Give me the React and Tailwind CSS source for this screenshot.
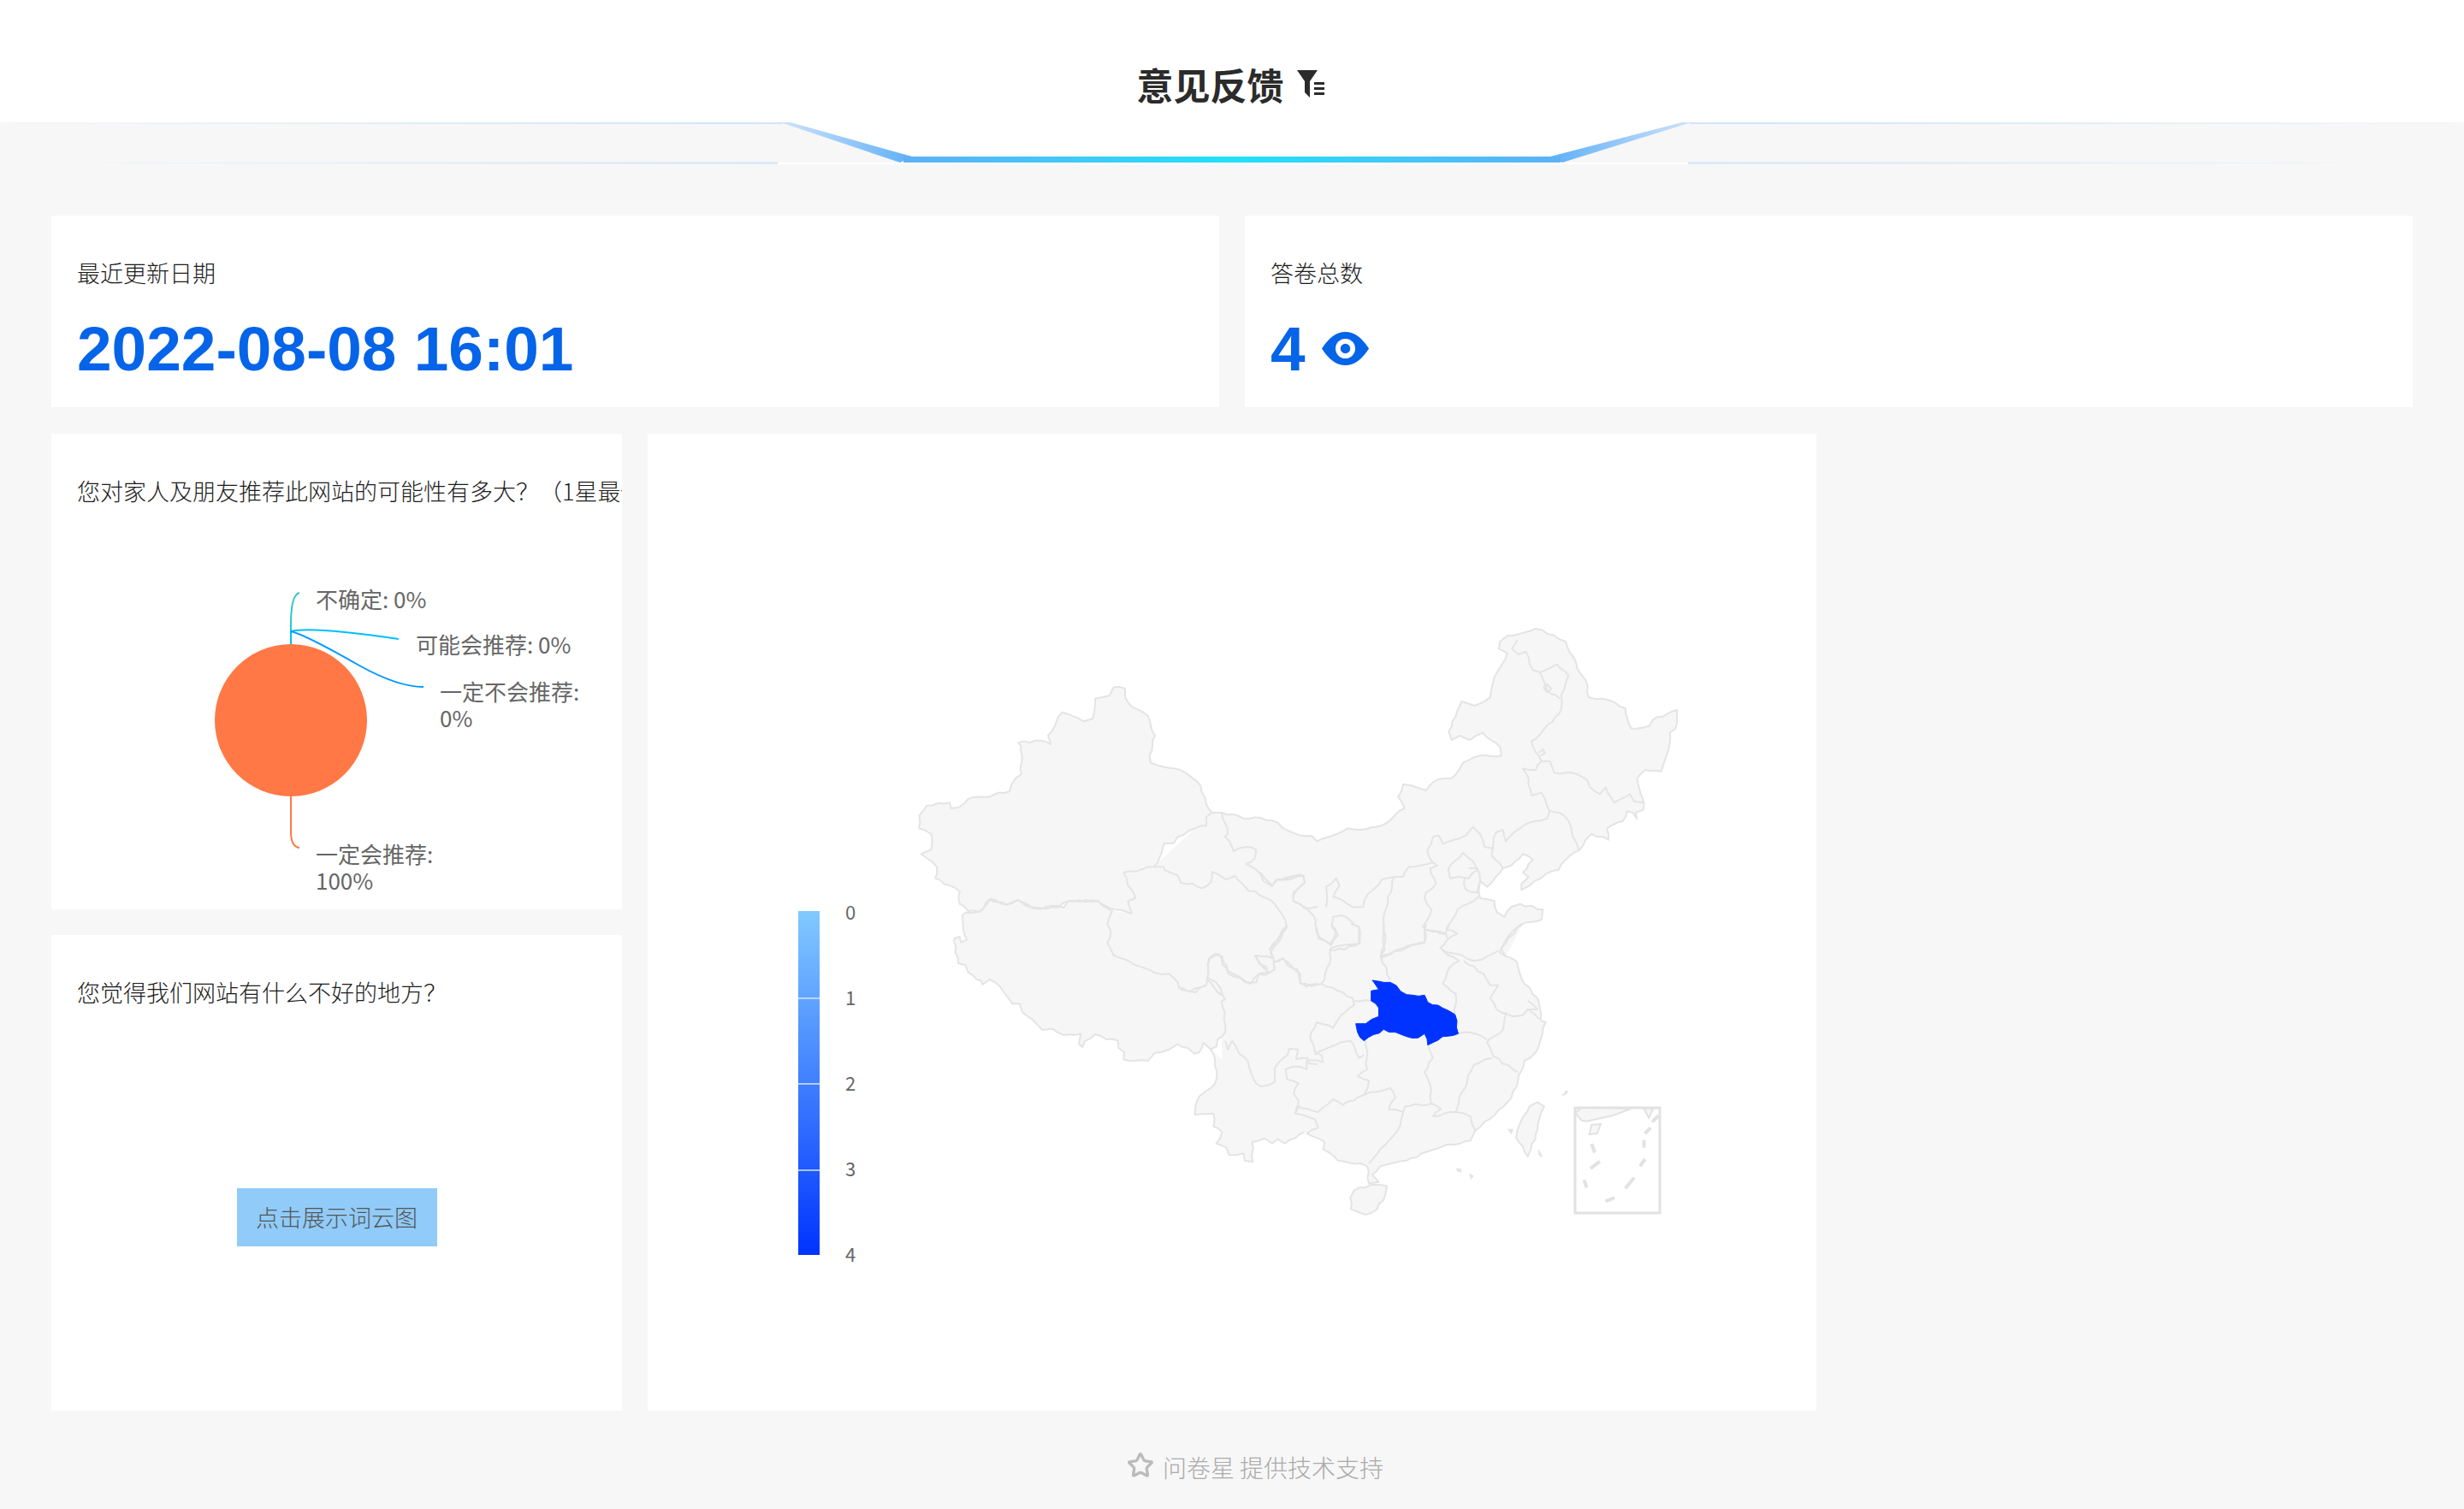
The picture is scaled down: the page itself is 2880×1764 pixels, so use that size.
import React from 'react';
import { Star } from 'lucide-react';

// crop origin + scale each trace was read from
const CROPS = {
  A: [1040, 720, 3, 3],
  B: [1500, 720, 3, 3],
  C: [1060, 1020, 3, 3],
  D: [1380, 1080, 2.613, 3],
};

const read = (crop, s) => {
  const [ox, oy, sx, sy] = CROPS[crop];
  return s.trim().split(/\s+/).map((p) => {
    const [x, y] = p.split(',').map(Number);
    return [ox + x / sx, oy + y / sy];
  });
};

// borders in the picture are rough, so break long segments up a little
const rough = (pts) => {
  const out = [];
  for (let i = 0; i < pts.length - 1; i++) {
    const [ax, ay] = pts[i];
    const [bx, by] = pts[i + 1];
    const len = Math.hypot(bx - ax, by - ay) || 1;
    const n = Math.max(1, Math.floor(len / 6));
    for (let k = 0; k < n; k++) {
      const t = k / n;
      const x = ax + (bx - ax) * t;
      const y = ay + (by - ay) * t;
      const off = k === 0 ? 0 : Math.sin(x * 12.9 + y * 78.2) * 1.3;
      out.push([x - ((by - ay) / len) * off, y + ((bx - ax) / len) * off]);
    }
  }
  out.push(pts[pts.length - 1]);
  return out;
};

const str = (pts) => pts.map((p) => `${p[0].toFixed(1)},${p[1].toFixed(1)}`).join(' ');

const xinjiang = read('A', '785,250 825,255 825,285 850,320 905,350 930,420 910,490 915,515 1020,540 1090,595 1110,660 1130,690 1110,705 1110,735 1070,745 1010,775 995,797 962,797 945,850 925,880 820,900 835,945 862,990 835,1000 848,1043 790,1030 730,1000 625,1000 590,1022 530,1025 475,1015 450,995 410,1012 350,995 315,1038 275,1035 245,1010 245,965 190,940 160,920 165,880 110,835 145,820 145,765 103,745 103,700 130,665 210,655 215,675 240,672 275,642 330,635 420,615 440,570 462,555 460,455 450,445 530,437 565,450 555,420 605,338 680,370 712,360 720,290 770,280 785,250');
const tibet = read('C', '205,140 255,137 290,93 350,113 390,97 440,125 470,128 510,117 550,123 565,100 670,100 720,135 703,180 715,205 703,245 725,290 800,325 870,352 920,355 950,385 955,405 990,418 1050,395 1055,370 1085,385 1115,445 1103,452 1115,490 1117,560 1105,575 1090,585 1085,610 1065,620 1040,597 1025,630 1008,635 985,615 950,602 920,620 870,632 845,660 800,660 760,655 762,630 742,615 740,590 700,585 660,567 625,590 615,612 603,600 610,565 550,570 510,548 475,552 440,515 405,490 395,460 370,460 340,420 310,385 290,375 265,393 260,380 215,350 205,325 180,318 165,240 168,230 185,225 190,245 210,235 197,180 195,150 205,140');
const yunnan = read('C', '1065,620 1080,655 1087,700 1080,740 1050,765 1025,785 1012,820 1010,850 1075,845 1075,890 1105,910 1085,950 1120,965 1130,990 1180,985 1185,1010 1213,1015 1210,945 1255,932 1280,950 1300,935 1325,950 1395,910');
const north = read('A', '1130,690 1165,690 1260,712 1300,708 1360,725 1380,745');
const northEast = read('B', '0,745 70,772 100,772 118,790 225,745 290,748 345,735 425,675 403,635 420,590 450,595 500,612 545,572 590,570 630,515 690,490 765,490 760,460 700,410 655,435 620,420 590,435 580,405 625,300 670,315 725,285 735,235 785,130 755,115 760,90 785,70 885,45 950,68 990,90 1040,200 1060,225 1070,285 1140,295 1200,325 1220,395 1285,385 1295,365 1380,330 1375,395 1355,410 1350,470 1325,545 1270,540 1240,570 1260,640 1262,680 1235,690 1240,712 1225,690 1205,685 1190,720 1135,745 1140,785 1080,765 1060,785 1040,820 990,855 965,890 920,905 865,945 835,960 835,940 860,915 840,900 875,855 840,835 800,875 770,885 745,915 715,950 690,930 685,965 690,990 740,1000 750,1040 775,1055 800,1020 830,1010 910,1030 905,1065 850,1075 800,1110 765,1170 780,1195');
const coast = read('D', '1045,0 1000,50 975,100 1025,130 1050,210 1090,260 1100,340 1115,345 1105,385 1085,450 1050,480 1030,550 1010,610 960,670 900,725 885,760 800,780 750,800 690,830 610,850 585,880 605,905 575,910 570,850 550,840 480,830 435,790 440,765 385,735');

// only used to fill: the eastern ring, and the pocket between Xinjiang and Tibet
const mainland = [...north, ...northEast, ...coast, [1525, 1323], [1428, 1290], [1428, 1200]];
const pocket = [
  ...read('A', '925,880 820,900 835,945 862,990 835,1000 848,1043'),
  ...read('C', '720,135 703,180 715,205 703,245 725,290 800,325 870,352 920,355 950,385 955,405 990,418 1050,395 1055,370'),
  [1480, 1170],
  [1450, 1000],
  [1417, 950],
];

const outlines = [
  xinjiang,
  tibet,
  yunnan,
  [...north, ...northEast],
  coast,
  read('A', '1165,690 1185,765 1175,775 1200,810 1205,825 1250,810 1285,820 1280,850 1250,870 1300,905 1310,930 1340,948 1355,925 1400,925 1440,905'),
  read('A', '925,880 960,880 965,892 1010,910 1020,935 1060,938 1095,955 1125,935 1130,898 1180,925 1210,912 1260,965 1280,965 1350,1010 1375,1045 1392,1090 1350,1150 1330,1170'),
  read('C', '1330,190 1275,265 1280,300 1225,290 1235,320 1260,330 1265,355'),
  read('C', '1055,370 1060,300 1080,285 1105,293 1125,345 1165,365 1185,385 1225,385 1235,355 1255,360 1290,340 1285,315 1320,300 1335,325 1370,340 1380,385 1400,400 1440,390'),
  read('C', '1117,590 1125,620 1140,590 1165,635 1195,660 1225,740 1240,750 1290,735 1290,685 1335,640 1340,618 1372,620 1365,655 1405,650 1410,670 1440,672'),
  read('C', '1240,0 1280,45 1300,25 1390,10 1395,35 1355,70 1355,100 1395,125 1440,120'),
  read('B', '0,920 70,910 75,935 35,980 35,1000 80,1025 105,1050 125,1125 165,1150 185,1110 170,1090 175,1055 205,1050 265,1090 268,1145 215,1170 160,1170'),
  read('B', '150,1020 150,950 185,920 197,945 175,985 225,1010 245,1022 280,1020 285,995 345,925 390,915 355,1040 350,1120 355,1170 340,1195'),
  read('B', '800,115 825,135 850,125 875,190 900,198 960,170 1000,210 975,275 975,325 945,370 870,440 895,490 905,510 935,510 950,550 1010,550 1065,575 1075,600 1110,625 1130,600 1160,655 1215,625 1230,650 1262,655'),
  read('B', '820,85 800,115'),
  read('B', '900,198 925,260 970,290'),
  read('B', '912,250 925,240 940,255 925,268 912,250'),
  read('B', '895,480 910,468 918,482 900,490'),
  read('B', '905,510 885,540 840,535 860,570 870,630 905,620 930,680 985,700 1010,745 1015,775 1035,820'),
  read('B', '935,680 925,710 880,720 830,745 780,790 770,750 745,760 735,815 705,810 690,765 665,740 640,770 560,800 545,770 525,775 505,820 520,860 540,875 515,885 535,940 500,970 495,990 520,1030 490,1090 500,1100 570,1115 575,1130'),
  read('B', '735,815 730,840 770,885'),
  read('B', '630,830 665,860 680,890 650,920 615,915 585,920 578,890 600,860 630,830'),
  read('B', '650,885 680,885 690,935 680,970 640,960 635,920'),
  read('B', '525,865 440,880 420,915 390,915'),
  read('B', '685,985 610,1030 575,1100 610,1115 575,1135 550,1165 580,1195'),
  read('B', '495,1095 495,1145 430,1165 340,1195'),
  read('D', '620,0 625,60 612,115 640,195'),
  read('D', '612,118 680,85 745,65 750,0'),
  read('D', '745,20 810,35 820,0'),
  read('D', '800,95 850,130 820,155 800,210 840,245 838,318'),
  read('D', '800,95 860,110 895,130 920,125 970,95'),
  read('D', '865,130 925,175 945,215 970,215 945,260 965,300 1015,325 1045,320 1060,300 1095,335'),
  read('D', '1060,270 1090,300 1060,300'),
  read('D', '995,310 985,370 935,415 955,465 1030,520'),
  read('D', '848,385 880,380 935,405'),
  read('D', '755,425 770,470 745,520 765,585 765,630 795,650 770,675 840,660'),
  read('D', '950,470 895,495 875,550 850,620 840,660 885,675 900,725'),
  read('D', '635,650 680,660 685,640 765,630'),
  read('D', '680,660 670,710 610,790 575,840'),
  read('D', '385,735 420,715 410,685 350,665 355,640 420,660 465,615 495,635 560,600 580,590 640,575 655,610 635,650'),
  read('D', '560,600 575,550 540,535 570,510 565,410'),
  read('D', '350,665 360,620 345,595 360,560 325,545 320,510 345,500 385,510 385,480 435,485 430,460 410,450 395,400 415,345 465,365 490,320 530,285 525,260 480,235 430,210 400,218 365,210 365,175 310,122 285,135 275,100 325,10'),
  read('D', '410,460 440,440 490,415 520,410 545,470 560,460'),
  read('D', '530,270 582,270'),
  read('D', '430,210 455,140 460,85 545,70 545,10 520,0'),
  read('D', '410,0 420,50 460,75 480,40 460,0'),
  read('D', '225,110 270,170 240,175 215,210 185,190 145,175 115,105 90,120 80,195 125,250'),
  read('D', '0,230 45,240 75,215'),
];

const hainan = read('D', '530,935 580,915 630,920 625,950 600,1000 565,1020 520,1000 518,960 530,935');
const taiwan = read('D', '1090,625 1110,640 1090,720 1070,790 1060,815 1025,750 1040,690 1065,640 1090,625');
const hubei = read('D', '585,198 640,205 690,248 745,250 755,275 800,295 838,318 848,385 800,395 755,425 745,385 725,400 690,395 620,370 560,410 540,380 535,350 565,350 605,325 605,295 582,270 582,235 605,230 590,205 585,198');
const islands = [
  '1003,722 1013,722 1010,732',
  '1095,800 1103,815 1095,808',
  '845,860 855,862 855,868 847,866',
  '885,880 892,885 887,892',
  '1170,598 1180,585 1178,595',
];
const insetLand = read('D', '1205,662 1225,645 1375,648 1320,672 1240,692 1225,690');
const insetTriangle = read('D', '1415,648 1443,648 1430,680');
const insetQuad = read('D', '1255,705 1283,702 1272,735 1248,738');
const dashes = [
  '1460,672 1440,695',
  '1435,715 1418,735',
  '1415,758 1415,785',
  '1418,825 1403,850',
  '1385,890 1358,928',
  '1325,960 1298,973',
  '1232,898 1240,925',
  '1280,833 1252,858',
  '1255,772 1265,802',
].map((d) => read('D', d));

const ChinaMap = () => (
  <svg className="block w-[1366px] h-[1141px]" viewBox="757 507 1366 1141">
    <defs>
      <linearGradient id="legendFill" x1="0" y1="0" x2="0" y2="1">
        <stop offset="0%" stopColor="#80caff" />
        <stop offset="100%" stopColor="#0033ff" />
      </linearGradient>
    </defs>

    {/* fill first, so that no shape covers the border of another */}
    <g fill="#f6f6f6">
      <polygon points={str(mainland)} />
      <polygon points={str(pocket)} />
      <polygon points={str(xinjiang)} />
      <polygon points={str(tibet)} />
      <polygon points={str(yunnan)} />
    </g>
    <g fill="none" stroke="#e4e4e4" strokeWidth="2" strokeLinejoin="round">
      {outlines.map((line, i) => (
        <polyline key={i} points={str(rough(line))} />
      ))}
    </g>
    <g fill="#f6f6f6" stroke="#e4e4e4" strokeWidth="2">
      <polygon points={str(rough(hainan))} />
      <polygon points={str(rough(taiwan))} />
      {islands.map((s) => (
        <polygon key={s} points={str(read('D', s))} />
      ))}
    </g>
    <polygon points={str(rough(hubei))} fill="#0033ff" stroke="#0033ff" strokeWidth="1" />

    {/* South China Sea inset */}
    <rect x="1841" y="1295" width="99" height="123" fill="none" stroke="#e2e2e2" strokeWidth="3" />
    <polygon points={str(insetLand)} fill="#f6f6f6" stroke="#e2e2e2" strokeWidth="2" />
    <polygon points={str(insetTriangle)} fill="#f6f6f6" stroke="#e2e2e2" strokeWidth="2" />
    <polygon points={str(insetQuad)} fill="#f6f6f6" stroke="#e2e2e2" strokeWidth="2" />
    {dashes.map((d, i) => (
      <polyline key={i} points={str(d)} fill="none" stroke="#e2e2e2" strokeWidth="4" />
    ))}

    {/* visual map legend */}
    <rect x="933" y="1065" width="25" height="402" fill="url(#legendFill)" />
    {[1167, 1267, 1368].map((y) => (
      <line key={y} x1="933" x2="958" y1={y} y2={y} stroke="#dbe6f7" strokeWidth="1.5" />
    ))}
    {[['0', 1065], ['1', 1165], ['2', 1265], ['3', 1365], ['4', 1465]].map(([label, y]) => (
      <text key={label} x="994" y={y} textAnchor="middle" dominantBaseline="central" fontSize="22" fill="#666">
        {label}
      </text>
    ))}
  </svg>
);

const PieChart = () => (
  <svg className="block w-[667px] h-[471px]" viewBox="60 592 667 471">
    <g fill="none" strokeWidth="2">
      <path d="M340 753 L340 730 Q340 695 350 693" stroke="#2ec7c9" />
      <path d="M340 753 L340 738 Q364 732 466 747" stroke="#00bfff" />
      <path d="M340 738 Q357 742 420 778 Q465 803 495 803" stroke="#0099ff" />
      <path d="M340 931 L340 972 Q340 990 350 991" stroke="#ff7845" />
    </g>
    <circle cx="340" cy="842" r="89" fill="#ff7845" />
    <g fontSize="26" fill="#666" dominantBaseline="central">
      <text x="369" y="699.500">不确定: 0%</text>
      <text x="486" y="752.500">可能会推荐: 0%</text>
      <text x="514" y="807.500">一定不会推荐:</text>
      <text x="514" y="838.500">0%</text>
      <text x="369" y="997.500">一定会推荐:</text>
      <text x="369" y="1028.500">100%</text>
    </g>
  </svg>
);

const HeaderDeco = () => (
  <svg className="absolute left-0 top-[143px] w-[2880px] h-[50px]" viewBox="0 143 2880 50">
    <defs>
      <linearGradient id="band" x1="0" y1="0" x2="1" y2="0">
        <stop offset="0%" stopColor="#5fb0f7" />
        <stop offset="50%" stopColor="#22e0f8" />
        <stop offset="100%" stopColor="#5fb0f7" />
      </linearGradient>
      <linearGradient id="fadeLeft" x1="0" y1="0" x2="1" y2="0">
        <stop offset="0%" stopColor="#cfe3fa" stopOpacity="0" />
        <stop offset="100%" stopColor="#cfe3fa" />
      </linearGradient>
      <linearGradient id="fadeRight" x1="0" y1="0" x2="1" y2="0">
        <stop offset="0%" stopColor="#cfe3fa" />
        <stop offset="100%" stopColor="#cfe3fa" stopOpacity="0" />
      </linearGradient>
      <linearGradient id="slopeLeft" x1="0" y1="0" x2="1" y2="0">
        <stop offset="0%" stopColor="#cfe3fa" />
        <stop offset="100%" stopColor="#5fb0f7" />
      </linearGradient>
      <linearGradient id="slopeRight" x1="0" y1="0" x2="1" y2="0">
        <stop offset="0%" stopColor="#5fb0f7" />
        <stop offset="100%" stopColor="#cfe3fa" />
      </linearGradient>
    </defs>
    <polygon points="915,143 1052,190 1826,190 1975,143" fill="#fff" />
    <rect x="0" y="143" width="915" height="2" fill="url(#fadeLeft)" />
    <rect x="1975" y="143" width="905" height="2" fill="url(#fadeRight)" />
    <rect x="40" y="189.500" width="870" height="2" fill="url(#fadeLeft)" />
    <rect x="1973" y="189.500" width="830" height="2" fill="url(#fadeRight)" />
    <rect x="909" y="190" width="1064" height="2" fill="#fff" />
    <polygon points="912,143 924,143 1066,183 1052,190" fill="url(#slopeLeft)" />
    <polygon points="1966,143 1977,143 1826,190 1812,183" fill="url(#slopeRight)" />
    <rect x="1056" y="183" width="768" height="7" fill="url(#band)" />
  </svg>
);

const App = () => {
  return (
    <div className="relative min-h-[1764px] bg-[#f7f7f7] font-['Noto_Sans_CJK_SC',sans-serif] text-[#1c1c1c]">
      {/* Header */}
      <div className="h-[143px] bg-white flex justify-center items-center pt-[52px] pr-[4px] gap-[15px]">
        <h1 className="text-[43px] leading-[50px] font-bold text-[#2b2b2b]">意见反馈</h1>
        <svg className="w-[32px] h-[32px]" viewBox="0 0 32 32" fill="#2b2b2b">
          <polygon points="0,0 24,0 15,13 15,32 9,26 9,13" />
          <rect x="20" y="14" width="12" height="3" />
          <rect x="20" y="20" width="12" height="3" />
          <rect x="20" y="26" width="12" height="3" />
        </svg>
      </div>
      <HeaderDeco />

      <div className="pt-[109px] px-[60px]">
        {/* Stat cards */}
        <div className="flex gap-[30px]">
          <div className="w-[1365px] h-[224px] bg-white pt-[49px] px-[30px]">
            <p className="text-[27px] leading-[36px] font-light">最近更新日期</p>
            <p className="mt-[31px] text-[73px] leading-[80px] font-bold text-[#0564e8] font-['Liberation_Sans',sans-serif]">
              2022-08-08 16:01
            </p>
          </div>
          <div className="w-[1365px] h-[224px] bg-white pt-[49px] px-[30px]">
            <p className="text-[27px] leading-[36px] font-light">答卷总数</p>
            <div className="mt-[31px] flex items-center">
              <span className="text-[73px] leading-[80px] font-bold text-[#0564e8] font-['Liberation_Sans',sans-serif]">4</span>
              <svg className="ml-[19px] mt-[-2px] w-[55px] h-[39px]" viewBox="0 0 55 39">
                <path d="M0 19.500 C8 7 17 0 27.500 0 C38 0 47 7 55 19.500 C47 32 38 39 27.500 39 C17 39 8 32 0 19.500 Z" fill="#0564e8" />
                <circle cx="27.500" cy="19.500" r="11.500" fill="#fff" />
                <circle cx="27.500" cy="19.500" r="5.700" fill="#0564e8" />
              </svg>
            </div>
          </div>
        </div>

        {/* Charts */}
        <div className="flex gap-[30px] mt-[31px]">
          <div className="w-[667px] flex flex-col gap-[30px]">
            <div className="h-[556px] bg-white overflow-hidden">
              <p className="pt-[49px] pl-[30px] text-[27px] leading-[36px] font-light whitespace-nowrap">
                您对家人及朋友推荐此网站的可能性有多大？（1星最低，5星最高）
              </p>
              <PieChart />
            </div>
            <div className="h-[556px] bg-white">
              <p className="pt-[49px] pl-[30px] text-[27px] leading-[36px] font-light">您觉得我们网站有什么不好的地方？</p>
              <button className="block mx-auto mt-[211px] w-[234px] h-[68px] bg-[#90cbf9] text-[27px] font-light text-[#555]">
                点击展示词云图
              </button>
            </div>
          </div>
          <div className="w-[1366px] h-[1142px] bg-white">
            <ChinaMap />
          </div>
        </div>

        {/* Footer */}
        <div className="flex justify-center items-center gap-[10px] mt-[46px] pl-[54px] text-[28px] leading-[40px] font-light text-[#aaa]">
          <Star className="w-[32px] h-[32px] mt-[-4px]" strokeWidth={2.5} color="#bbb" />
          <span>问卷星 提供技术支持</span>
        </div>
      </div>
    </div>
  );
};

export default App;
